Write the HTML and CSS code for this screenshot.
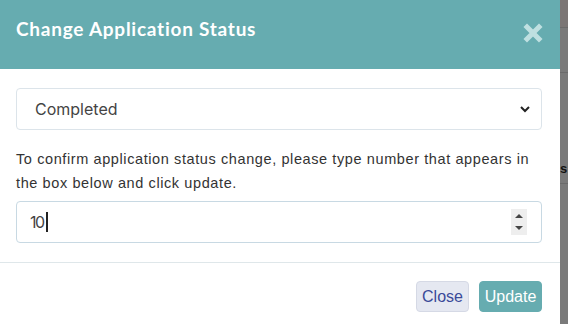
FILE: index.html
```html
<!DOCTYPE html>
<html>
<head>
<meta charset="utf-8">
<link rel="stylesheet" href="styles.css">
</head>
<body>
<div class="page">
  <div class="modal">
    <div class="modal-header">
      <h4 class="modal-title">Change Application Status</h4>
      <button class="close-x" aria-label="Close">
        <svg width="20" height="20" viewBox="0 0 20 20"><path d="M4 4 L16 16 M16 4 L4 16" stroke="currentColor" stroke-width="5" stroke-linecap="square"/></svg>
      </button>
    </div>
    <div class="modal-body">
      <div class="select-box">
        <span class="select-text">Completed</span>
        <svg class="chev" width="12" height="8" viewBox="0 0 12 8"><path d="M2 2 L6 6 L10 2" fill="none" stroke="#222" stroke-width="2"/></svg>
      </div>
      <p class="hint">To confirm application status change, please type number that appears in the box below and click update.</p>
      <div class="num-box">
        <span class="num-text">10</span><span class="caret"></span>
        <span class="spin">
          <svg width="16" height="26" viewBox="0 0 16 26"><path d="M4 9 L8 5 L12 9 Z" fill="#444"/><path d="M4 17 L8 21 L12 17 Z" fill="#444"/></svg>
        </span>
      </div>
    </div>
    <div class="modal-footer">
      <button class="btn btn-close">Close</button>
      <button class="btn btn-update">Update</button>
    </div>
  </div>
  <div class="backdrop">
    <div class="bd-row bd-top"></div>
    <div class="bd-row bd-a"></div>
    <div class="bd-row bd-b"><span class="bd-s">s</span></div>
    <div class="bd-row bd-c"></div>
  </div>
</div>
</body>
</html>
```
FILE: styles.css
```css
html, body { margin: 0; padding: 0; background: #7b7b7b; }
body { width: 568px; height: 324px; overflow: hidden; font-family: "Liberation Sans", Arial, sans-serif; }
.page { display: flex; height: 324px; }
.modal { width: 560px; flex: none; background: #fff; display: flex; flex-direction: column; }
.modal-header {
  height: 69px; box-sizing: border-box; background: #66acb0;
  display: flex; align-items: flex-start; justify-content: space-between;
  padding: 17px 17px 0 16px;
}
.modal-title { margin: 0; color: #fff; font-family: "Lato", sans-serif; font-weight: 700; font-size: 19px; line-height: 24px; letter-spacing: 0.75px; }
.close-x { border: 0; background: none; padding: 0; margin-top: 6px; color: #bfe0e1; width: 20px; height: 20px; display: block; }
.close-x svg { display: block; }
.modal-body { padding: 19px 18px 0 16px; }
.select-box {
  height: 42px; box-sizing: border-box; border: 1px solid #dce4ea; border-radius: 4px;
  display: flex; align-items: center; justify-content: space-between; padding: 0 10px 0 18px;
}
.select-text { font-family: "Inter", "Liberation Sans", sans-serif; font-size: 16px; color: #444; }
.hint { margin: 17px 0 0; font-size: 14.5px; line-height: 24px; letter-spacing: 0.6px; color: #333; }
.num-box {
  margin-top: 6px; height: 42px; box-sizing: border-box; border: 1px solid #c8d9e3; border-radius: 4px;
  display: flex; align-items: center; padding: 0 14px 0 13px;
}
.num-text { font-family: "Inter", "Liberation Sans", sans-serif; font-size: 16px; color: #444; letter-spacing: -1.5px; }
.caret { width: 2px; height: 20px; background: #222; margin-left: 2px; }
.spin { margin-left: auto; width: 16px; height: 26px; background: #eeeeee; }
.spin svg { display: block; }
.modal-footer {
  margin-top: 19px; border-top: 1px solid #dfe7ea;
  display: flex; justify-content: flex-end; gap: 10px; padding: 18px 18px 0 0;
}
.btn { height: 31px; box-sizing: border-box; border-radius: 4px; font-family: "Liberation Sans", Arial, sans-serif; font-size: 16px; padding: 0 4px; }
.btn-close { background: #e5e8f1; border: 1px solid #d5d9e5; color: #3a4a99; width: 53px; }
.btn-update { background: #66acb0; border: 1px solid #66acb0; color: #fff; width: 63px; }
.backdrop { flex: 1; display: flex; flex-direction: column; background: #7a7a7a; }
.bd-row { border-bottom: 1px solid #6b6b6b; }
.bd-top { height: 27px; background: #7b7675; }
.bd-a { height: 44px; }
.bd-b { height: 110px; position: relative; }
.bd-s { position: absolute; left: 0; top: 88px; font-weight: 700; font-size: 13px; color: #111; }
.bd-c { flex: 1; border: 0; }
```
